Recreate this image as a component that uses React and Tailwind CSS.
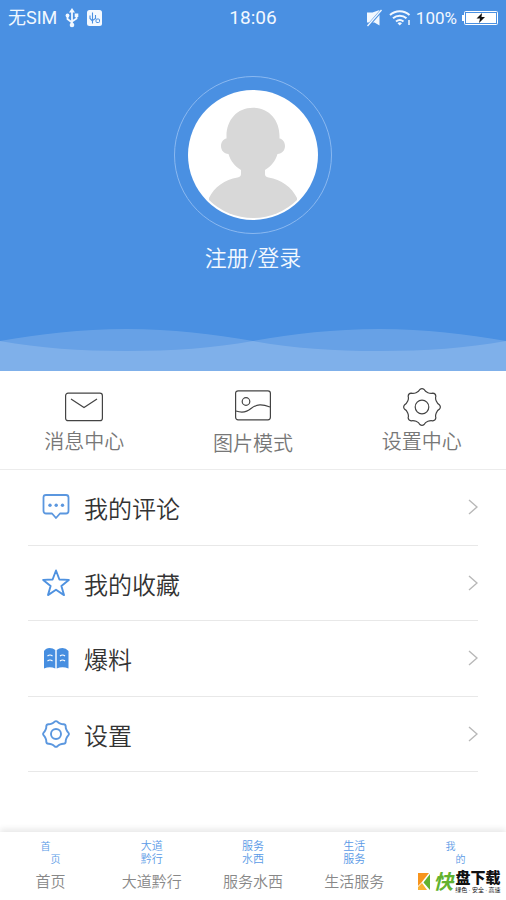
import React from "react";

function gearPath(c, r, depth) {
  const pt = (deg, rad) => {
    const a = (deg * Math.PI) / 180;
    return `${(c + rad * Math.cos(a)).toFixed(2)} ${(c + rad * Math.sin(a)).toFixed(2)}`;
  };
  let d = `M${pt(-7, r * 0.95)}`;
  for (let i = 0; i < 8; i += 1) {
    const a = i * 45;
    d += `Q${pt(a, r * 1.04)} ${pt(a + 7, r * 0.95)}`;
    d += `C${pt(a + 13, r * depth)} ${pt(a + 32, r * depth)} ${pt(a + 38, r * 0.95)}`;
  }
  return `${d}Z`;
}

function StatusBar() {
  return (
    <div className="grid h-9 grid-cols-3 items-center px-2 text-[17px] leading-6">
      <div className="flex items-center gap-2">
        <span className="text-[18px] whitespace-nowrap">无SIM</span>
        <svg width="14" height="20" viewBox="0 0 14 20" fill="none" stroke="currentColor" strokeWidth="1.8" aria-hidden="true">
          <path d="M7 3v14M2.500 8v3L7 14.500M11.500 7v3.500L7 13.500" />
          <path d="M7 0l3 4.500H4z" fill="currentColor" stroke="none" />
          <circle cx="7" cy="17" r="2.300" fill="currentColor" stroke="none" />
          <circle cx="2.500" cy="7.500" r="1.900" fill="currentColor" stroke="none" />
          <path d="M9.700 5.500h3.600v3.500H9.700z" fill="currentColor" stroke="none" />
        </svg>
        <svg width="15" height="16" viewBox="0 0 15 16" fill="none" aria-hidden="true">
          <rect width="15" height="16" rx="2.500" fill="#f4f9ff" />
          <path d="M5.500 2.500v11M3 5.500v3l2.500 2.500M8.500 5v3.500L5.500 10.500" stroke="#4a90e2" strokeWidth="1.100" />
          <rect x="9" y="9" width="3.500" height="3.500" rx="1" stroke="#4a90e2" />
        </svg>
      </div>
      <div className="text-center text-[19px]">18:06</div>
      <div className="flex items-center justify-end gap-1">
        <svg className="mr-0.5" width="17" height="18" viewBox="0 0 17 18" aria-hidden="true">
          <path d="M1 3.500h5.500l7-2.500v15.500l-5-3H1z" fill="currentColor" />
          <path d="M1.500 17.500L15.500 1.500" stroke="#4a90e2" strokeWidth="2.800" />
          <path d="M1.500 17L15.500 1" stroke="currentColor" strokeWidth="1.400" />
        </svg>
        <svg width="23" height="18" viewBox="0 0 23 18" fill="none" stroke="currentColor" strokeWidth="2" aria-hidden="true">
          <path d="M1 6a14.500 14.500 0 0 1 19.500 0M4 9.300a10 10 0 0 1 13.500 0M7 12.500a6 6 0 0 1 7.500 0" />
          <path d="M8.500 14.200a3.500 3.500 0 0 1 4.500 0L10.750 16.500z" fill="currentColor" stroke="none" />
          <path d="M20 11v5" strokeWidth="1.500" />
        </svg>
        <span>100%</span>
        <svg width="37" height="16" viewBox="0 0 37 16" aria-hidden="true">
          <rect x="3.500" y="1.500" width="33" height="13" rx="1" fill="none" stroke="#fff" />
          <rect x="5" y="3" width="30" height="10" fill="#fff" />
          <rect x="1" y="5" width="2" height="6" fill="#fff" />
          <path d="M21 3l-5.500 5.500h3.500l-1 4.500 6-6h-3.500z" fill="#111" />
        </svg>
      </div>
    </div>
  );
}

function Avatar() {
  return (
    <svg width="158" height="158" viewBox="0 0 158 158" aria-hidden="true">
      <defs>
        <clipPath id="face">
          <circle cx="79" cy="79" r="63" />
        </clipPath>
      </defs>
      <circle cx="79" cy="79" r="78.500" fill="none" stroke="#8ab8f0" />
      <circle cx="79" cy="79" r="65" fill="#fff" />
      <g clipPath="url(#face)" fill="#d8d8d8">
        <path d="M79 31.700C63 31.700 52.500 44 52.500 60v2.500c-3.500.5-5.500 4-5.500 7.500 0 4.500 3 7.500 7.500 8C56.500 85 61 90.500 67 94v4c0 2-1 3-3.500 3.400C51 103.500 40 111 35 122v22h88v-22c-5-11-16-18.500-28.500-20.600-2.500-.4-3.500-1.400-3.500-3.400v-4c6-3.500 10.500-9 12.500-16 4.500-.5 7.500-3.500 7.500-8 0-3.500-2-7-5.500-7.500V60C105.500 44 95 31.700 79 31.700z" />
      </g>
    </svg>
  );
}

function Waves() {
  return (
    <svg className="block h-[44px] w-full" viewBox="0 0 506 44" preserveAspectRatio="none" aria-hidden="true">
      <path d="M0 14C40 7 80 2 126.500 2S213 7 253 14C293 7 333 2 379.500 2S466 7 506 14v30H0z" fill="#fff" fillOpacity=".16" />
      <path d="M0 14c40 7 80 10 126.500 10S213 21 253 14c40 7 80 10 126.500 10S466 21 506 14v30H0z" fill="#fff" fillOpacity=".16" />
    </svg>
  );
}

const shortcuts = [
  {
    label: "消息中心",
    icon: (
      <svg className="mt-5" width="38" height="30" viewBox="0 0 38 30" fill="none" stroke="#444" strokeWidth="1.200">
        <rect x=".6" y="1.200" width="36.800" height="27.500" rx="2.500" />
        <path d="M6 7l13 8.500L32 7" />
      </svg>
    ),
  },
  {
    label: "图片模式",
    icon: (
      <svg className="mt-[18px] mb-[3px]" width="36" height="31" viewBox="0 0 36 31" fill="none" stroke="#444" strokeWidth="1.200">
        <rect x=".6" y=".8" width="34.800" height="29" rx="2.500" />
        <circle cx="11" cy="11.500" r="3.800" />
        <path d="M1 21c6 2 11 1 15-2.500C22 14 27 14 35 17" />
      </svg>
    ),
  },
  {
    label: "设置中心",
    icon: (
      <svg className="mt-4 -mb-1" width="38" height="38" viewBox="0 0 38 38" fill="none" stroke="#444" strokeWidth="1.200">
        <path d={gearPath(19, 18.5, 0.82)} />
        <circle cx="19" cy="19" r="6.800" />
      </svg>
    ),
  },
];

const menu = [
  {
    label: "我的评论",
    icon: (
      <svg width="28" height="28" viewBox="0 0 28 28" fill="none" stroke="#5b97df" strokeWidth="1.800" strokeLinejoin="round">
        <path d="M4 2h20a2.500 2.500 0 0 1 2.500 2.500v13.500a2.500 2.500 0 0 1-2.500 2.500h-6L14 25l-4-4.500H4A2.500 2.500 0 0 1 1.500 18V4.500A2.500 2.500 0 0 1 4 2z" />
        <g fill="#5b97df" stroke="none">
          <circle cx="8" cy="12.300" r="1.700" />
          <circle cx="14.200" cy="12.300" r="1.700" />
          <circle cx="20.500" cy="12.300" r="1.700" />
        </g>
      </svg>
    ),
  },
  {
    label: "我的收藏",
    icon: (
      <svg width="28" height="28" viewBox="0 0 28 28" fill="none" stroke="#4f92e0" strokeWidth="1.900" strokeLinejoin="round">
        <path d="M14 1.500l3.400 9 9.400.4-7.400 6 2.600 9.200-8-5.300-8 5.300 2.600-9.200-7.400-6 9.400-.4z" />
      </svg>
    ),
  },
  {
    label: "爆料",
    icon: (
      <svg width="28" height="28" viewBox="0 0 28 28">
        <path d="M2 7q2-3 5.500-3T13.300 6v18.500Q8 22 2 24.500zM14.700 6q2.300-2 5.800-2T26.500 7v17.500q-6-2.500-11.800 0z" fill="#468ee0" />
        <path d="M5.500 12q2.500-2 5 0M5.500 17q2.500-2 5 0M18 12q2.500-2 5 0M18 17q2.500-2 5 0" fill="none" stroke="#fff" strokeWidth="1.200" />
      </svg>
    ),
  },
  {
    label: "设置",
    icon: (
      <svg width="28" height="28" viewBox="0 0 28 28" fill="none" stroke="#5b97df" strokeWidth="1.900">
        <path d={gearPath(14, 13, 0.86)} />
        <circle cx="14" cy="14" r="5" />
      </svg>
    ),
  },
];

const tabs = [
  { label: "首页", top: "首", bottom: "页", split: true },
  { label: "大道黔行", top: "大道", bottom: "黔行" },
  { label: "服务水西", top: "服务", bottom: "水西" },
  { label: "生活服务", top: "生活", bottom: "服务" },
  { label: "我的", top: "我", bottom: "的", split: true, branded: true },
];

function Brand() {
  return (
    <span className="flex items-center justify-center pl-2">
      <svg width="13" height="18" viewBox="0 0 13 18" aria-hidden="true">
        <path d="M0 0h11L3 10l-3 3z" fill="#f7941d" />
        <path d="M0 14l4-4 5 7H0z" fill="#f9b233" />
        <path d="M12 1v16L5.500 9.500z" fill="#62b22f" />
      </svg>
      <span className="mx-0.5 text-[20px] leading-6 font-bold text-[#62b22f] italic">快</span>
      <span className="flex flex-col items-center whitespace-nowrap text-[#111]">
        <span className="text-[15px] leading-4 font-black">盘下载</span>
        <span className="text-[6px] leading-2 font-normal">绿色 · 安全 · 高速</span>
      </span>
    </span>
  );
}

export default function App() {
  return (
    <div className="flex min-h-screen flex-col bg-white font-['Roboto','Noto_Sans_CJK_SC',sans-serif] font-[350]">
      <header className="flex flex-col bg-[#4a90e2] font-normal text-[#f2f8ff]">
        <StatusBar />
        <div className="flex flex-col items-center pt-10">
          <Avatar />
          <button type="button" className="mt-[9px] mb-[52px] text-[22px] leading-8 font-[350]">
            注册/登录
          </button>
        </div>
        <Waves />
      </header>

      <nav aria-label="快捷入口" className="grid h-[99px] grid-cols-3 border-b border-[#ececec] pt-px">
        {shortcuts.map((s) => (
          <button key={s.label} type="button" className="flex flex-col items-center text-[20px] leading-10 text-[#777]">
            {s.icon}
            <span>{s.label}</span>
          </button>
        ))}
      </nav>

      <ul className="flex h-[302px] flex-col px-7">
        {menu.map((m) => (
          <li key={m.label} className="flex-1 border-b border-[#e8e8e8]">
            <button type="button" className="flex h-full w-full items-center pl-[14px] text-[24px] text-[#333]">
              {m.icon}
              <span className="ml-[14px] flex-1 pt-[6px] text-left">{m.label}</span>
              <svg width="10" height="16" viewBox="0 0 10 16" fill="none" stroke="#b8b8b8" strokeWidth="1.400" aria-hidden="true">
                <path d="M1 1l8 7-8 7" />
              </svg>
            </button>
          </li>
        ))}
      </ul>

      <nav aria-label="主导航" className="mt-auto grid h-[68px] grid-cols-5 shadow-[0_-3px_6px_rgba(0,0,0,0.09)]">
        {tabs.map((t) => (
          <button key={t.label} type="button" aria-label={t.label} className="flex flex-col items-center pt-2">
            <span
              className={
                t.split
                  ? "flex w-5 flex-col text-[10px] leading-[13px] text-[#5a9ae6]"
                  : "flex w-6 flex-col items-center text-[11px] leading-[13px] text-[#5a9ae6]"
              }
            >
              <span className="text-left">{t.top}</span>
              <span className="text-right">{t.bottom}</span>
            </span>
            <span className="mt-1 text-[15px] leading-6 whitespace-nowrap text-[#888]">
              {t.branded ? <Brand /> : t.label}
            </span>
          </button>
        ))}
      </nav>
    </div>
  );
}
